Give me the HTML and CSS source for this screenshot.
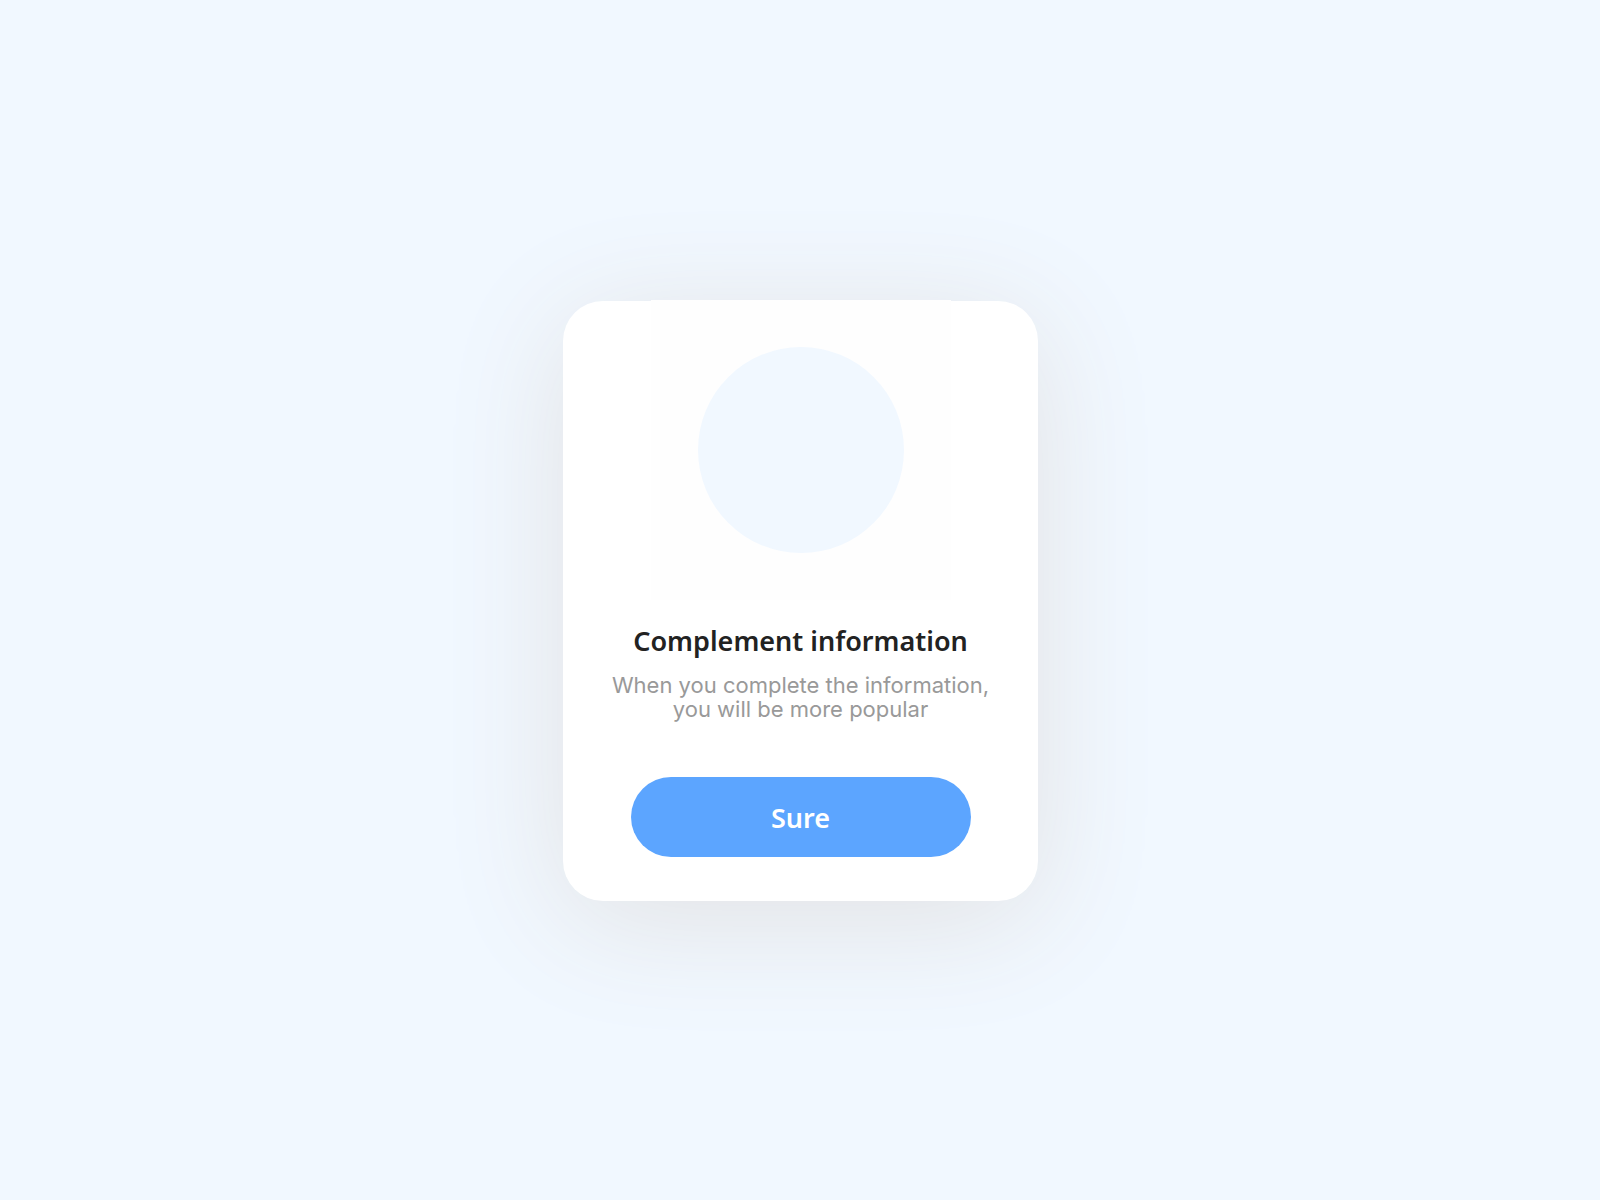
FILE: index.html
```html
<!DOCTYPE html>
<html lang="en">
<head>
    <meta charset="UTF-8">
    <meta name="viewport" content="width=device-width, initial-scale=1.0">
    <title>Complement information</title>
    <link rel="stylesheet" href="styles.css">
</head>
<body>
    <main>
        <section class="card">
            <div class="picture">
                <div class="circle"></div>
            </div>
            <h1>Complement information</h1>
            <p>When you complete the information,<br>you will be more popular</p>
            <button type="button">Sure</button>
        </section>
    </main>
</body>
</html>
```

FILE: styles.css
```css
* {
    box-sizing: border-box;
}
body {
    margin: 0;
    background-color: #f1f8ff;
    font-family: "Noto Sans", sans-serif;
}
main {
    min-height: 100vh;
    padding-top: 2px;
    padding-left: 1px;
    display: flex;
    align-items: center;
    justify-content: center;
}
.card {
    width: 475px;
    max-width: 100%;
    padding-bottom: 44px;
    display: flex;
    flex-direction: column;
    align-items: center;
    background-color: #fff;
    border-radius: 40px;
    box-shadow: 0 20px 125px #e2e2e4;
    text-align: center;
}
/* the picture area overlaps the top edge of the card */
.picture {
    width: 300px;
    height: 300px;
    margin-top: -1px;
    display: flex;
    align-items: center;
    justify-content: center;
    background-color: #fefefe;
}
.circle {
    width: 206px;
    height: 206px;
    border-radius: 50%;
    background-color: #f1f8ff;
}
h1 {
    margin: 25px 0 16px;
    font-size: 27px;
    line-height: 32px;
    font-weight: 600;
    color: #222;
}
p {
    margin: 0 0 56px;
    font-family: Inter, sans-serif;
    font-size: 22px;
    line-height: 24px;
    color: #999;
}
button {
    width: 340px;
    max-width: 100%;
    height: 80px;
    border: none;
    border-radius: 40px;
    background-color: #5ca5ff;
    color: #fff;
    font-family: inherit;
    font-size: 27px;
    font-weight: 600;
    cursor: pointer;
}
button:hover {
    background-color: #4796f8;
}
```
